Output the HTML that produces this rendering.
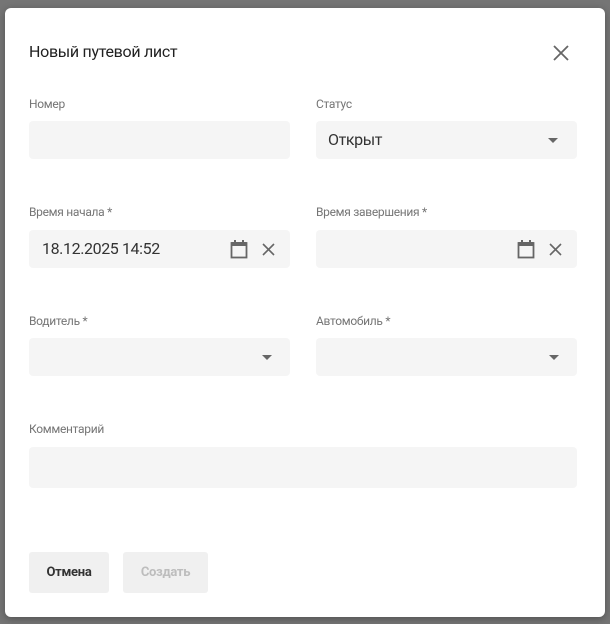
<!DOCTYPE html>
<html><head><meta charset="utf-8"><style>
*{margin:0;padding:0;box-sizing:border-box}
body{width:610px;height:624px;background:#757575;font-family:"Roboto","Liberation Sans",sans-serif;position:relative;overflow:hidden}
.dlg{position:absolute;left:5px;top:8px;width:600px;height:609px;background:#fff;border-radius:6px;box-shadow:0 2px 8px rgba(0,0,0,.3)}
.t{position:absolute;font-size:16px;color:#212121;left:24px;top:34px;letter-spacing:-0.3px}
.lb{position:absolute;font-size:12px;color:#757575;letter-spacing:-0.3px}
.in{position:absolute;background:#f5f5f5;border-radius:4px;height:38px}
.val{position:absolute;font-size:16px;color:#333;letter-spacing:-0.4px}
.arr{position:absolute;width:0;height:0;border-left:5px solid transparent;border-right:5px solid transparent;border-top:5px solid #666}
.btn{position:absolute;top:544px;height:41px;background:#f0f0f0;border-radius:3px;font-size:13px;font-weight:bold;text-align:center;line-height:41px;letter-spacing:-0.3px}
svg{position:absolute}
</style></head><body>
<div class="dlg">
<div class="t">Новый путевой лист</div>
<svg style="left:547px;top:36px" width="18" height="18" viewBox="0 0 18 18"><path d="M2 2L16 16M16 2L2 16" stroke="#666" stroke-width="1.8"/></svg>

<div class="lb" style="left:24px;top:89px">Номер</div>
<div class="lb" style="left:311px;top:89px">Статус</div>
<div class="in" style="left:24px;top:113px;width:261px"></div>
<div class="in" style="left:311px;top:113px;width:261px"></div>
<div class="val" style="left:323px;top:122px">Открыт</div>
<div class="arr" style="left:543px;top:130px"></div>

<div class="lb" style="left:24px;top:197px">Время начала *</div>
<div class="lb" style="left:311px;top:197px">Время завершения *</div>
<div class="in" style="left:24px;top:222px;width:261px"></div>
<div class="in" style="left:311px;top:222px;width:261px"></div>
<div class="val" style="left:37px;top:231px">18.12.2025 14:52</div>
<svg style="left:225px;top:231px" width="18" height="20" viewBox="0 0 18 20"><rect x="1.5" y="4" width="15" height="14.5" fill="none" stroke="#666" stroke-width="1.8"/><rect x="1.5" y="3" width="15" height="4" fill="#666"/><rect x="4" y="1" width="2" height="3" fill="#666"/><rect x="12" y="1" width="2" height="3" fill="#666"/></svg>
<svg style="left:257px;top:235px" width="13" height="13" viewBox="0 0 13 13"><path d="M1 1L12 12M12 1L1 12" stroke="#666" stroke-width="1.6"/></svg>
<svg style="left:512px;top:231px" width="18" height="20" viewBox="0 0 18 20"><rect x="1.5" y="4" width="15" height="14.5" fill="none" stroke="#666" stroke-width="1.8"/><rect x="1.5" y="3" width="15" height="4" fill="#666"/><rect x="4" y="1" width="2" height="3" fill="#666"/><rect x="12" y="1" width="2" height="3" fill="#666"/></svg>
<svg style="left:544px;top:235px" width="13" height="13" viewBox="0 0 13 13"><path d="M1 1L12 12M12 1L1 12" stroke="#666" stroke-width="1.6"/></svg>

<div class="lb" style="left:24px;top:306px">Водитель *</div>
<div class="lb" style="left:311px;top:306px">Автомобиль *</div>
<div class="in" style="left:24px;top:330px;width:261px"></div>
<div class="in" style="left:311px;top:330px;width:261px"></div>
<div class="arr" style="left:257px;top:347px"></div>
<div class="arr" style="left:544px;top:347px"></div>

<div class="lb" style="left:24px;top:414px">Комментарий</div>
<div class="in" style="left:24px;top:439px;width:548px;height:41px"></div>

<div class="btn" style="left:24px;width:80px;color:#333">Отмена</div>
<div class="btn" style="left:118px;width:85px;color:#bdbdbd">Создать</div>
</div>
</body></html>
